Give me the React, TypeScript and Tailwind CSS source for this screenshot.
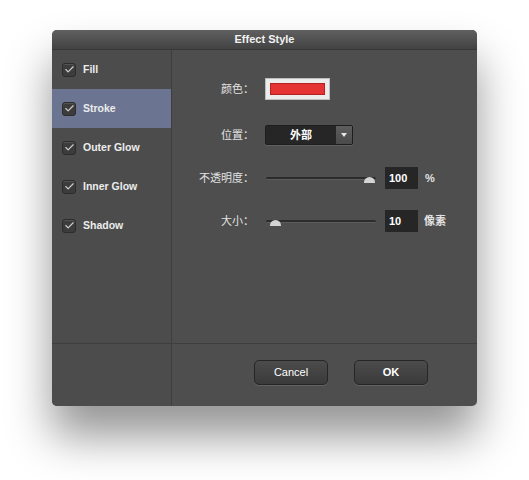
import { Check } from "lucide-react";

const font = { fontFamily: '"Liberation Sans", "Noto Sans CJK SC", sans-serif' };

const items = ["Fill", "Stroke", "Outer Glow", "Inner Glow", "Shadow"];

function CheckBox() {
  return (
    <div className="w-[14px] h-[14px] rounded-[3px] bg-[#3c3c3c] border border-[#2c2c2c] shadow-[inset_0_1px_0_rgba(255,255,255,0.12)] flex items-center justify-center">
      <Check size={11} strokeWidth={2.5} className="text-[#cfcfcf]" />
    </div>
  );
}

function Slider({ pos }: { pos: number }) {
  return (
    <div className="relative w-[110px] h-[12px]">
      <div className="absolute left-0 right-0 top-[5px] h-[3px] rounded-full bg-[#2c2c2c] border-b border-[#5c5c5c]" />
      <div
        className="absolute top-[5px] w-[11px] h-[6px] rounded-t-full bg-[#d4d4d4]"
        style={{ left: pos }}
      />
    </div>
  );
}

function Label({ text }: { text: string }) {
  return (
    <div className="w-[82px] text-right text-[11px] text-[#e2e2e2] shrink-0">
      {text}
    </div>
  );
}

export default function App() {
  return (
    <div className="min-h-[480px] bg-white pt-[30px] pl-[52px]" style={font}>
      <div className="w-[425px] h-[376px] rounded-[5px] bg-[#4e4e4e] shadow-[0_30px_45px_rgba(0,0,0,0.42)] flex flex-col overflow-hidden">
        <div className="h-[20px] shrink-0 bg-gradient-to-b from-[#606060] to-[#434343] border-b border-[#383838] flex items-center justify-center text-[11px] font-bold text-[#f2f2f2]">
          Effect Style
        </div>

        <div className="flex h-[293px] shrink-0">
          <div className="w-[120px] shrink-0 border-r border-[#3e3e3e] bg-[#4c4c4c] flex flex-col">
            {items.map((it) => (
              <div
                key={it}
                className={`h-[39px] flex items-center gap-[7px] px-[10px] text-[10.5px] font-bold text-[#ececec] ${
                  it === "Stroke" ? "bg-[#6b7591]" : ""
                }`}
              >
                <CheckBox />
                <span>{it}</span>
              </div>
            ))}
          </div>

          <div className="flex-1 flex flex-col pt-[28px]">
            <div className="flex items-center h-[22px] gap-[11px]">
              <Label text="颜色：" />
              <div className="w-[65px] h-[22px] bg-[#ececec] border border-[#bdbdbd] p-[4px]">
                <div className="w-full h-full bg-[#e53333] border border-[#b52020]" />
              </div>
            </div>

            <div className="flex items-center h-[20px] mt-[25px] gap-[11px]">
              <Label text="位置：" />
              <div className="w-[88px] h-[20px] flex rounded-[2px] bg-[#262626] border border-[#1e1e1e] shadow-[0_1px_0_rgba(255,255,255,0.1)]">
                <div className="flex-1 flex items-center justify-center text-[11px] font-bold text-white">
                  外部
                </div>
                <div className="w-[16px] flex items-center justify-center bg-gradient-to-b from-[#5e5e5e] to-[#4a4a4a]">
                  <div className="w-0 h-0 border-l-[3px] border-r-[3px] border-t-[4px] border-l-transparent border-r-transparent border-t-[#e8e8e8]" />
                </div>
              </div>
            </div>

            <div className="flex items-center h-[22px] mt-[22px]">
              <Label text="不透明度：" />
              <div className="ml-[12px]">
                <Slider pos={98} />
              </div>
              <div className="ml-[9px] w-[33px] h-[22px] bg-[#262626] flex items-center pl-[4px] text-[11px] font-bold text-white">
                100
              </div>
              <span className="ml-[7px] text-[11px] font-bold text-[#e2e2e2]">%</span>
            </div>

            <div className="flex items-center h-[22px] mt-[21px]">
              <Label text="大小：" />
              <div className="ml-[12px]">
                <Slider pos={4} />
              </div>
              <div className="ml-[9px] w-[33px] h-[22px] bg-[#262626] flex items-center pl-[4px] text-[11px] font-bold text-white">
                10
              </div>
              <span className="ml-[6px] text-[11px] font-bold text-[#e2e2e2]">像素</span>
            </div>
          </div>
        </div>

        <div className="flex flex-1 border-t border-[#3e3e3e]">
          <div className="w-[120px] shrink-0 border-r border-[#3e3e3e] bg-[#4c4c4c]" />
          <div className="flex-1 flex justify-end gap-[26px] pt-[16px] pr-[49px]">
            <button className="w-[74px] h-[25px] rounded-[5px] bg-gradient-to-b from-[#4c4c4c] to-[#3a3a3a] border border-[#262626] shadow-[0_1px_0_rgba(255,255,255,0.12)] text-[11px] text-white">
              Cancel
            </button>
            <button className="w-[74px] h-[25px] rounded-[5px] bg-gradient-to-b from-[#4c4c4c] to-[#3a3a3a] border border-[#262626] shadow-[0_1px_0_rgba(255,255,255,0.12)] text-[11px] font-bold text-white">
              OK
            </button>
          </div>
        </div>
      </div>
    </div>
  );
}
